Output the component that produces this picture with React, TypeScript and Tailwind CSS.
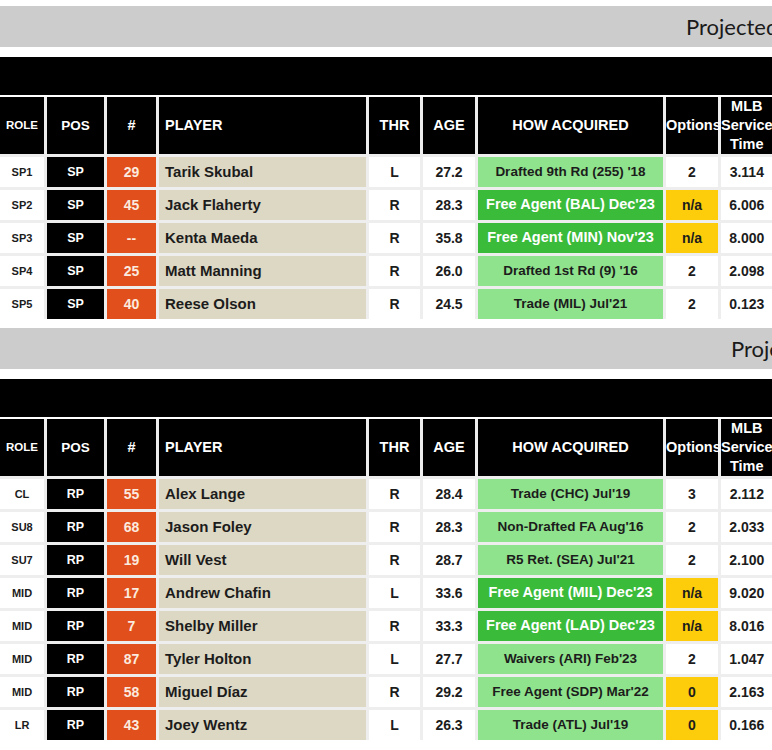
type Acq = 'light' | 'bright'

interface Player {
  role: string
  pos: string
  num: string
  name: string
  thr: string
  age: string
  acquired: string
  acq: Acq
  options: string
  service: string
}

const rotation: Player[] = [
  { role: 'SP1', pos: 'SP', num: '29', name: 'Tarik Skubal', thr: 'L', age: '27.2', acquired: "Drafted 9th Rd (255) '18", acq: 'light', options: '2', service: '3.114' },
  { role: 'SP2', pos: 'SP', num: '45', name: 'Jack Flaherty', thr: 'R', age: '28.3', acquired: "Free Agent (BAL) Dec'23", acq: 'bright', options: 'n/a', service: '6.006' },
  { role: 'SP3', pos: 'SP', num: '--', name: 'Kenta Maeda', thr: 'R', age: '35.8', acquired: "Free Agent (MIN) Nov'23", acq: 'bright', options: 'n/a', service: '8.000' },
  { role: 'SP4', pos: 'SP', num: '25', name: 'Matt Manning', thr: 'R', age: '26.0', acquired: "Drafted 1st Rd (9) '16", acq: 'light', options: '2', service: '2.098' },
  { role: 'SP5', pos: 'SP', num: '40', name: 'Reese Olson', thr: 'R', age: '24.5', acquired: "Trade (MIL) Jul'21", acq: 'light', options: '2', service: '0.123' },
]

const bullpen: Player[] = [
  { role: 'CL', pos: 'RP', num: '55', name: 'Alex Lange', thr: 'R', age: '28.4', acquired: "Trade (CHC) Jul'19", acq: 'light', options: '3', service: '2.112' },
  { role: 'SU8', pos: 'RP', num: '68', name: 'Jason Foley', thr: 'R', age: '28.3', acquired: "Non-Drafted FA Aug'16", acq: 'light', options: '2', service: '2.033' },
  { role: 'SU7', pos: 'RP', num: '19', name: 'Will Vest', thr: 'R', age: '28.7', acquired: "R5 Ret. (SEA) Jul'21", acq: 'light', options: '2', service: '2.100' },
  { role: 'MID', pos: 'RP', num: '17', name: 'Andrew Chafin', thr: 'L', age: '33.6', acquired: "Free Agent (MIL) Dec'23", acq: 'bright', options: 'n/a', service: '9.020' },
  { role: 'MID', pos: 'RP', num: '7', name: 'Shelby Miller', thr: 'R', age: '33.3', acquired: "Free Agent (LAD) Dec'23", acq: 'bright', options: 'n/a', service: '8.016' },
  { role: 'MID', pos: 'RP', num: '87', name: 'Tyler Holton', thr: 'L', age: '27.7', acquired: "Waivers (ARI) Feb'23", acq: 'light', options: '2', service: '1.047' },
  { role: 'MID', pos: 'RP', num: '58', name: 'Miguel Díaz', thr: 'R', age: '29.2', acquired: "Free Agent (SDP) Mar'22", acq: 'light', options: '0', service: '2.163' },
  { role: 'LR', pos: 'RP', num: '43', name: 'Joey Wentz', thr: 'L', age: '26.3', acquired: "Trade (ATL) Jul'19", acq: 'light', options: '0', service: '0.166' },
]

const cols = 'grid grid-cols-[44px_57px_49px_207px_51px_52px_185px_52px_1fr] gap-[3px]'
const cell = 'flex items-center justify-center h-[30px] text-[#1c1c1c]'
const head = 'flex items-center justify-center h-[57px] bg-black text-white text-[14.5px] font-bold leading-[19px] text-center'

function PlayerRow({ p }: { p: Player }) {
  const yellow = p.options === 'n/a' || p.options === '0'
  return (
    <>
      <div className={`${cell} bg-white text-[11px] font-bold`}>{p.role}</div>
      <div className={`${cell} bg-black text-white text-[12.5px] font-bold`}>{p.pos}</div>
      <div className={`${cell} bg-[#e1501c] text-[#fbeadf] text-[14px] font-bold`}>{p.num}</div>
      <div className={`${cell} !justify-start pl-[6px] bg-[#dcd8c3] text-[15px] font-bold`}>{p.name}</div>
      <div className={`${cell} bg-white text-[14px] font-bold`}>{p.thr}</div>
      <div className={`${cell} bg-white text-[14px] font-bold`}>{p.age}</div>
      {p.acq === 'bright' ? (
        <div className={`${cell} bg-[#3abb3a] !text-white text-[14.5px] font-bold whitespace-nowrap`}>{p.acquired}</div>
      ) : (
        <div className={`${cell} bg-[#90e38d] text-[13.5px] font-bold whitespace-nowrap`}>{p.acquired}</div>
      )}
      <div className={`${cell} ${yellow ? 'bg-[#fdcd0c]' : 'bg-white'} text-[14px] font-bold`}>{p.options}</div>
      <div className={`${cell} bg-white text-[14px] font-bold`}>{p.service}</div>
    </>
  )
}

function RosterTable({ title, titleOffset, players }: { title: string; titleOffset: string; players: Player[] }) {
  return (
    <section>
      {/* Title bar, text runs off the right edge like the wide page */}
      <div className={`h-[41px] bg-[#cccccc] flex items-center whitespace-nowrap ${titleOffset} font-['Lato',sans-serif] text-[22px] text-[#1a1a1a]`}>
        {title}
      </div>
      <div className="mt-[10px] h-[38px] bg-black" />
      <div className={`${cols} mt-[2px] bg-[#eeeeee]`}>
        <div className={`${head} !text-[11.5px]`}>ROLE</div>
        <div className={`${head} !text-[13.5px]`}>POS</div>
        <div className={head}>#</div>
        <div className={`${head} !justify-start pl-[6px]`}>PLAYER</div>
        <div className={head}>THR</div>
        <div className={head}>AGE</div>
        <div className={head}>HOW ACQUIRED</div>
        <div className={`${head} !justify-start`}>Options</div>
        <div className={`${head} flex-col whitespace-nowrap`}>
          <span>MLB</span>
          <span className="self-start">Service</span>
          <span>Time</span>
        </div>
        {players.map((p) => (
          <PlayerRow key={p.name} p={p} />
        ))}
      </div>
    </section>
  )
}

export default function App() {
  return (
    <div className="w-[772px] h-[750px] overflow-hidden bg-white pt-[6px] font-['Liberation_Sans',Arial,sans-serif]">
      <RosterTable title="Projected Rotation" titleOffset="pl-[686px]" players={rotation} />
      <div className="h-[9px]" />
      <RosterTable title="Projected Bullpen" titleOffset="pl-[731px]" players={bullpen} />
    </div>
  )
}
